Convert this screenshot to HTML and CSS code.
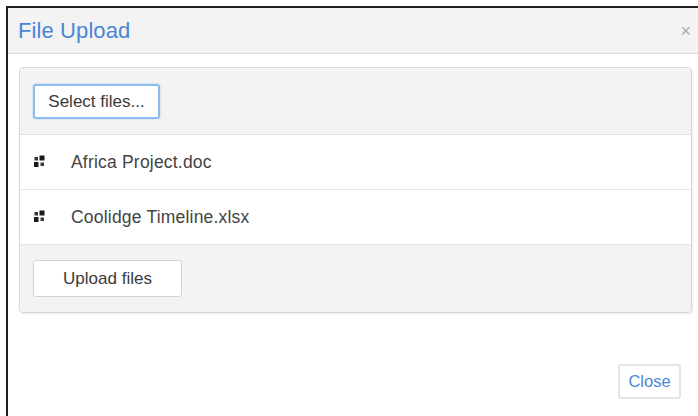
FILE: index.html
```html
<!DOCTYPE html>
<html lang="en">
<head>
<meta charset="utf-8">
<title>File Upload</title>
<link rel="stylesheet" href="styles.css">
</head>
<body>
<div class="window">
  <div class="dialog">
    <div class="dialog-header">
      <span class="dialog-title">File Upload</span>
      <span class="dialog-close">&times;</span>
    </div>
    <div class="dialog-body">
      <div class="upload">
        <div class="upload-toolbar">
          <button class="btn btn-focus">Select files...</button>
        </div>
        <ul class="file-list">
          <li class="file-row">
            <svg class="file-icon" width="11" height="13" viewBox="0 0 11 13">
              <rect x="0.5" y="2" width="3.5" height="3.5" fill="#333"/>
              <rect x="5.5" y="0.5" width="5" height="5" fill="#1a1a1a"/>
              <rect x="0" y="7" width="4.5" height="5" fill="#1a1a1a"/>
              <rect x="6.5" y="7.5" width="3.5" height="3.5" fill="#3a3a3a"/>
            </svg>
            <span class="file-name">Africa Project.doc</span>
          </li>
          <li class="file-row">
            <svg class="file-icon" width="11" height="13" viewBox="0 0 11 13">
              <rect x="0.5" y="2" width="3.5" height="3.5" fill="#333"/>
              <rect x="5.5" y="0.5" width="5" height="5" fill="#1a1a1a"/>
              <rect x="0" y="7" width="4.5" height="5" fill="#1a1a1a"/>
              <rect x="6.5" y="7.5" width="3.5" height="3.5" fill="#3a3a3a"/>
            </svg>
            <span class="file-name">Coolidge Timeline.xlsx</span>
          </li>
        </ul>
        <div class="upload-footer">
          <button class="btn btn-wide">Upload files</button>
        </div>
      </div>
    </div>
    <div class="dialog-actions">
      <button class="btn btn-link">Close</button>
    </div>
  </div>
</div>
</body>
</html>
```
FILE: styles.css
```css
html, body {
  margin: 0;
  padding: 0;
  background: #ffffff;
  overflow: hidden;
  width: 698px;
  height: 416px;
}

body {
  font-family: "Liberation Sans", Arial, sans-serif;
  color: #333;
}

.window {
  padding: 6px 0 0 6px;
}

/* dialog runs off the right and bottom of the window */
.dialog {
  width: 692px;
  height: 410px;
  border-top: 2px solid #1e1e1e;
  border-left: 2px solid #1e1e1e;
  background: #fff;
  box-sizing: border-box;
  display: flex;
  flex-direction: column;
}

.dialog-header {
  height: 46px;
  flex: none;
  background: #f3f3f3;
  border-bottom: 1px solid #dcdcdc;
  display: flex;
  align-items: center;
  justify-content: space-between;
  padding: 0 0 0 10px;
  box-sizing: border-box;
}

.dialog-title {
  font-size: 22px;
  color: #4a86d6;
  letter-spacing: 0.1px;
  margin-top: 1px;
}

.dialog-close {
  font-size: 18px;
  color: #aaa;
  margin-right: 7px;
  margin-top: 2px;
}

.dialog-body {
  padding: 13px 0 0 11px;
}

.upload {
  width: 671px;
  border: 1px solid #d6d6d6;
  border-radius: 4px;
  box-shadow: 1px 1px 2px rgba(0, 0, 0, 0.08);
  overflow: hidden;
}

.upload-toolbar {
  background: #f3f3f3;
  height: 67px;
  padding: 16px 0 0 13px;
  box-sizing: border-box;
  border-bottom: 1px solid #e2e2e2;
}

.btn {
  font-family: "Liberation Sans", Arial, sans-serif;
  font-size: 17px;
  color: #3a3a3a;
  background: #fff;
  border: 1px solid #d3d3d3;
  border-radius: 3px;
  padding: 0;
  box-sizing: border-box;
}

.btn-focus {
  width: 127px;
  height: 35px;
  border: 2px solid #8dbdf0;
  box-shadow: 0 0 2px rgba(90, 150, 230, 0.5);
}

.file-list {
  list-style: none;
  margin: 0;
  padding: 0;
}

.file-row {
  height: 55px;
  border-bottom: 1px solid #e6e6e6;
  display: flex;
  align-items: center;
  padding-left: 14px;
  box-sizing: border-box;
  background: #fff;
}

.file-icon {
  display: block;
  margin-top: -2px;
}

.file-name {
  font-size: 17.5px;
  margin-left: 26px;
  color: #444;
  letter-spacing: 0.2px;
}

.upload-footer {
  background: #f3f3f3;
  height: 67px;
  padding: 15px 0 0 13px;
  box-sizing: border-box;
}

.btn-wide {
  width: 149px;
  height: 37px;
}

.dialog-actions {
  display: flex;
  justify-content: flex-end;
  padding: 51px 0 0 0;
  width: 673px;
}

.btn-link {
  width: 63px;
  height: 35px;
  color: #4a86d6;
  font-size: 16.5px;
  border: 2px solid #e4e4e4;
}
```
